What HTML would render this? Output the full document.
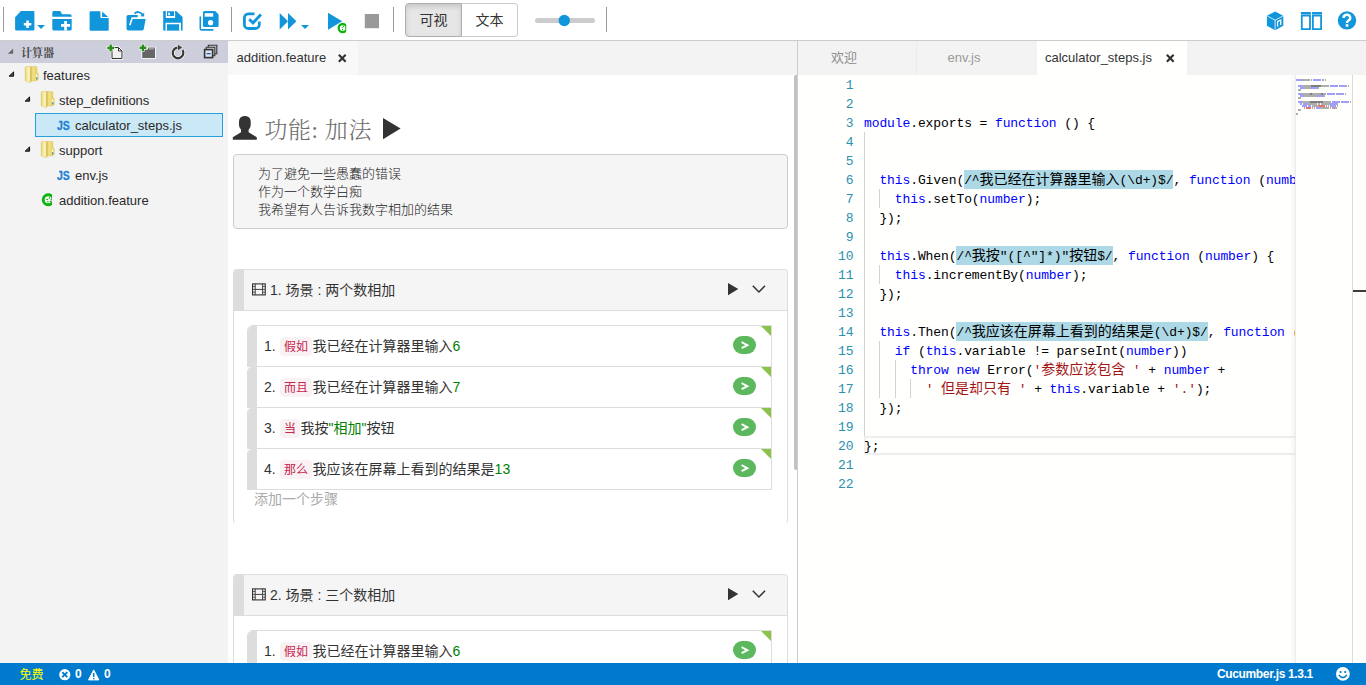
<!DOCTYPE html><html lang="zh-CN"><head><meta charset="utf-8"><title>Cucumber IDE</title><style>
*{box-sizing:border-box;margin:0;padding:0}
html,body{width:1366px;height:685px;overflow:hidden;background:#fff}
body{position:relative;font-family:"Liberation Sans","Noto Sans CJK SC",sans-serif;font-size:13px;color:#333}
.abs{position:absolute}
svg{position:absolute;overflow:visible}
#toolbar{position:absolute;left:0;top:0;width:1366px;height:41px;background:#fff;border-bottom:1px solid #ccc}
.sep{position:absolute;top:7px;width:1px;height:25px;background:#999}
#btngrp{position:absolute;left:405px;top:3px;width:113px;height:34px}
#btngrp div{position:absolute;top:0;height:34px;border:1px solid #ccc;font-size:14px;line-height:32px;text-align:center;color:#333}
#b1{left:0;width:57px;background:#e6e6e6;border-color:#adadad !important;border-radius:4px 0 0 4px;box-shadow:inset 0 3px 5px rgba(0,0,0,.125)}
#b2{left:56px;width:57px;background:#fff;border-radius:0 4px 4px 0;border-left-color:#adadad !important}
#sidebar{position:absolute;left:0;top:41px;width:228px;height:622px;background:#f3f3f3}
#sbhead{position:absolute;left:0;top:0;width:228px;height:22px;background:#cccedb}
#sbtitle{position:absolute;left:21px;top:1px;line-height:22px;font-size:11px;font-weight:bold;color:#444;font-family:"Liberation Serif","Noto Serif CJK SC",serif}
.row{position:absolute;left:0;width:228px;height:25px;line-height:26px;font-size:13px;color:#2a2a2a;white-space:nowrap}
.row span{position:absolute;top:0}
.js{font-weight:bold;font-size:12.5px;color:#1e7fd3;-webkit-text-stroke:.3px #1e7fd3;transform:scaleX(.84);transform-origin:0 50%}
#sel{position:absolute;left:35px;top:72px;width:188px;height:24px;background:#cbe8f6;border:1px solid #26a0da}
.tabbar{position:absolute;top:41px;height:34px;background:#f3f3f3}
.tab{position:absolute;top:0;height:34px;line-height:33px;font-size:13px;white-space:nowrap}
#mid{position:absolute;left:228px;top:75px;width:569px;height:588px;background:#fff;overflow:hidden}
#right{position:absolute;left:798px;top:75px;width:568px;height:588px;background:#fffffe;overflow:hidden}
#vline{position:absolute;left:797px;top:41px;width:1px;height:622px;background:#ccc}
#status{position:absolute;left:0;top:663px;width:1366px;height:22px;background:#007acc;color:#fff;font-size:12px;line-height:22px}
.cjk{font-family:"Liberation Sans","Noto Sans CJK SC",sans-serif}
.panel{position:absolute;left:5px;width:555px;border:1px solid #ddd;border-radius:4px;background:#fff}
.phead{position:absolute;left:0;top:0;width:553px;height:41px;background:#f5f5f5;border-bottom:1px solid #ddd;border-radius:3px 3px 0 0;overflow:hidden}
.phead .bar{position:absolute;left:0;top:0;width:10px;height:41px;background:#ddd}
.ptitle{position:absolute;left:36px;top:0;line-height:40px;font-size:14px;color:#333;white-space:nowrap}
.step{position:absolute;left:13px;width:525px;height:42px;border:1px solid #ddd;background:#fff;border-radius:6px 0 0 0;overflow:hidden}
.step .bar{position:absolute;left:-1px;top:-1px;width:10px;height:42px;background:#ddd}
.step .txt{position:absolute;left:16px;top:0;line-height:40px;font-size:14px;color:#333;white-space:nowrap}
.kw{background:#f9f2f4;color:#c7254e;font-size:12px;padding:3px 4px 2px 4.5px;border-radius:4px;margin-right:.5px}
.g{color:#008000}
.tri{position:absolute;right:0;top:0;width:0;height:0;border-top:10px solid #8bc34a;border-left:10px solid transparent}
.badge{position:absolute;left:485px;top:10px;width:23.3px;height:18px;border-radius:9px;background:#5cb85c}
.code{position:absolute;left:0;top:0;font-family:"Liberation Mono","Noto Sans CJK SC",monospace;font-size:13px;letter-spacing:-0.1px;line-height:19px;white-space:pre;color:#000}
.ln{position:absolute;left:0;width:55.5px;text-align:right;height:19px;line-height:21px;color:#2b91af}
.cl{position:absolute;left:66px;height:19px;line-height:21px}
.k{color:#0000ff}.s{color:#a31515}
.zh{font-size:14px;letter-spacing:0;line-height:0;font-family:"Liberation Mono","Noto Sans CJK SC",monospace}
.hl{background:#add8e6;display:inline-block;height:19px;vertical-align:top}
.guide{position:absolute;width:1px;background:#d3d3d3}
#mm i{position:absolute;height:1.3px;display:block}
</style></head><body><div id="toolbar"><div class="sep" style="left:3px"></div><div class="sep" style="left:231px"></div><div class="sep" style="left:393px"></div><div class="sep" style="left:606px"></div><svg width="1366" height="40" viewBox="0 0 1366 40" style="left:0;top:0"><path fill="#1296db" d="M15.1 17.2 L20.9 11 H33.4 a1 1 0 0 1 1 1 V29.6 a1 1 0 0 1 -1 1 H16.1 a1 1 0 0 1 -1 -1 Z"/><path fill="#fff" d="M26.3 20.5h2.5v2.5h2.5v2.5h-2.5v2.5h-2.5v-2.5h-2.5v-2.5h2.5z"/><path fill="#1296db" d="M37.2 24.9h7.8l-3.9 4.2z"/><path fill="#1296db" d="M52.3 16.7 V12.5 a1.5 1.5 0 0 1 1.5 -1.5 H59.6 a1.5 1.5 0 0 1 1.3 .8 L62 14.2 H70 a1.7 1.7 0 0 1 1.7 1.7 V16.7 Z"/><path fill="#1296db" d="M52.3 18.9 H71.7 V28.9 a1.7 1.7 0 0 1 -1.7 1.7 H54 a1.7 1.7 0 0 1 -1.7 -1.7 Z"/><path fill="#fff" d="M64.2 20.9h2.7v3.2h3.2v2.7h-3.2v3.8h-2.7v-3.8h-3.2v-2.7h3.2z"/><path fill="#1296db" d="M89.6 12.2 a1 1 0 0 1 1 -1 H100.4 V17 a1 1 0 0 0 1 1 H108.7 V29.7 a1 1 0 0 1 -1 1 H90.6 a1 1 0 0 1 -1 -1 Z"/><path fill="#1296db" d="M102.1 11.6 L108.2 16.9 H102.1 Z"/><path fill="#1296db" d="M126.5 16.8 a1.8 1.8 0 0 1 1.8 -1.8 H137.7 V17.3 H131.6 L129.1 24.9 L130.6 25.4 L132.7 19 H145.7 L143.7 29.2 a1.8 1.8 0 0 1 -1.7 1.4 H128.3 a1.8 1.8 0 0 1 -1.8 -1.8 Z"/><path fill="none" stroke="#1296db" stroke-width="1.8" d="M134.6 13.6 C136.5 11.4 140.5 11.2 142.6 14.8"/><path fill="#1296db" d="M144.2 12.4 V16.6 L140.3 16.2 Z"/><path fill="#1296db" d="M163.2 11 H176.2 L182.6 16.9 V30.6 H163.2 Z"/><path fill="#fff" d="M165.8 11 H175.1 V18 H165.8 Z M165.5 22.7 H181 V30.6 H165.5 Z"/><path fill="#1296db" d="M167 11.3 H174 V16.1 H167 Z M167 24.2 H179.1 V30.6 H167 Z"/><path fill="#fff" d="M168.2 12.7 H170 V15.2 H168.2 Z"/><path fill="#1296db" d="M203 12.5 a1.5 1.5 0 0 1 1.5 -1.5 H215.2 L218.6 14.4 V25.4 a1.5 1.5 0 0 1 -1.5 1.5 H204.5 a1.5 1.5 0 0 1 -1.5 -1.5 Z"/><path fill="#fff" d="M204.7 13.2 H213.2 V16.7 H204.7 Z"/><circle cx="210.6" cy="22.7" r="2.6" fill="#fff"/><path fill="none" stroke="#1296db" stroke-width="1.6" stroke-linecap="round" d="M200.3 17 V28.4 a1.5 1.5 0 0 0 1.5 1.5 H212.8"/><path fill="none" stroke="#1296db" stroke-width="2.8" d="M254.5 13.9 H248.4 a4 4 0 0 0 -4 4 V24.5 a4 4 0 0 0 4 4 H255.3 a4 4 0 0 0 4 -4 V21.5"/><path fill="none" stroke="#1296db" stroke-width="2.9" d="M249.2 19.2 L253 22.9 L260.9 14.4"/><path fill="#1296db" d="M279.7 13 L288 21.2 L279.7 29.4 Z M288 13 L296.4 21.2 L288 29.4 Z"/><path fill="#1296db" d="M301 24.9h8l-4 4.2z"/><path fill="#1296db" d="M328 12.7 L342.2 21.2 L328 29.7 Z"/><defs><clipPath id="cc"><rect x="330" y="20" width="16.2" height="16"/></clipPath></defs><g clip-path="url(#cc)"><circle cx="342.7" cy="28" r="5.6" fill="#fff"/><circle cx="342.7" cy="28" r="4" fill="none" stroke="#0db30d" stroke-width="2.3"/><circle cx="343.5" cy="26.4" r=".55" fill="#0db30d"/><circle cx="342.3" cy="27.5" r=".55" fill="#0db30d"/><circle cx="345.4" cy="27.5" r=".55" fill="#0db30d"/><circle cx="342.5" cy="29.4" r=".55" fill="#0db30d"/></g><rect x="364.8" y="14" width="14.2" height="14.2" fill="#999"/><rect x="535" y="18" width="60" height="5" rx="2.5" fill="#ccc"/><circle cx="564.3" cy="20.5" r="5.7" fill="#1296db"/><path fill="#1296db" d="M1275.1 11.4 L1283.3 15.8 V25.8 L1275.1 30.3 L1266.9 25.8 V15.8 Z"/><path fill="none" stroke="#fff" stroke-width=".8" d="M1267.3 16 L1275.1 20.2 L1282.9 16 M1275.1 20.2 V29.8"/><path fill="none" stroke="#fff" stroke-width="1.3" d="M1277.6 26.6 V21.6 L1280.7 20 V25"/><path fill="#1296db" d="M1300.9 12.1 H1310.9 V14.4 H1300.9 Z M1312 12.1 H1322 V14.4 H1312 Z"/><path fill="none" stroke="#1296db" stroke-width="1.8" d="M1301.8 15.6 H1310 V29.1 H1301.8 Z M1312.9 15.6 H1321.1 V29.1 H1312.9 Z"/><circle cx="1347" cy="20.4" r="9.2" fill="#1296db"/><path fill="none" stroke="#fff" stroke-width="2.4" d="M1343.6 18 a3.3 3.1 0 1 1 4.6 2.7 c-1 .5 -1.2 1 -1.2 2.2"/><rect x="1345.7" y="24.2" width="2.6" height="2.5" fill="#fff"/></svg><div id="btngrp"><div id="b1">可视</div><div id="b2">文本</div></div></div><div id="sidebar"><div id="sbhead"><div id="sbtitle">计算器</div><svg width="228" height="22" viewBox="0 41 228 22" style="left:0;top:0"><path fill="#666" d="M13.1 48.7 V53.8 H7.8 Z"/><path fill="#f0f0f0" stroke="#fff" stroke-width="2.4" d="M112 47.5 H118.5 L122 51 V58.5 H112 Z"/><path fill="#f0f0f0" stroke="#333" stroke-width="1" d="M112 47.5 H118.5 L122 51 V58.5 H112 Z M118.5 47.5 V51 H122"/><path fill="#fff" d="M106.6 46.3h2.3v-2.3h3.4v2.3h2.3v3.4h-2.3v2.3h-3.4v-2.3h-2.3z"/><path fill="#2a8c1f" d="M107.3 46.8h2.2v-2.2h2.4v2.2h2.2v2.4h-2.2v2.2h-2.4v-2.2h-2.2z"/><path fill="#666" stroke="#fff" stroke-width="1.6" d="M142.2 49.4 H147.6 L148.4 47.6 H155 V58 H142.2 Z"/><path fill="#666" d="M142.2 49.4 H147.6 L148.4 47.6 H155 V58 H142.2 Z"/><path fill="#d8d8d8" d="M149 48.5 H154 V49.3 H149 Z"/><path fill="#fff" d="M138.8 46.1h2.3v-2.3h3.4v2.3h2.3v3.4h-2.3v2.3h-3.4v-2.3h-2.3z"/><path fill="#2a8c1f" d="M139.5 46.6h2.2v-2.2h2.4v2.2h2.2v2.4h-2.2v2.2h-2.4v-2.2h-2.2z"/><path fill="none" stroke="#fff" stroke-width="3.6" d="M178 47.6 A5.3 5.3 0 1 0 182.6 50.2"/><path fill="none" stroke="#3a3a3a" stroke-width="2.3" d="M178 47.6 A5.3 5.3 0 1 0 182.6 50.2"/><path fill="#3a3a3a" stroke="#fff" stroke-width=".6" d="M177.6 44 L182.6 47.6 L177.6 51 Z"/><path fill="none" stroke="#333" stroke-width="1.1" d="M208.3 47.3 V45.3 H216.8 V53.8 H214.8 M206.3 49.3 V47.3 H214.8 V55.8 H212.8"/><rect x="204.6" y="49.6" width="8" height="8" fill="#dfe3ee" stroke="#333" stroke-width="1.6"/><rect x="206.6" y="53" width="4" height="1.3" fill="#1a5fb4"/></svg></div><div id="sel"></div><div class="row" style="top:22px"><svg width="7" height="7" viewBox="0 0 7 7" style="left:8.3px;top:8px"><path fill="#4a4a4a" stroke="#000" stroke-width=".9" stroke-linejoin="round" d="M5.6 .9 V5.2 H1.1 Z"/></svg><svg width="14" height="17" viewBox="0 0 14 17" style="left:24.9px;top:2.6px"><defs><linearGradient id="fa0" x1="0" x2="1"><stop offset="0" stop-color="#e3ca5f"/><stop offset=".2" stop-color="#f1e08a"/><stop offset=".5" stop-color="#f8eeb0"/><stop offset=".66" stop-color="#fffbe8"/><stop offset=".78" stop-color="#f0de84"/><stop offset="1" stop-color="#d0b146"/></linearGradient><linearGradient id="fb0" x1="0" x2="1"><stop offset="0" stop-color="#d6b94e"/><stop offset=".3" stop-color="#f3e288"/><stop offset="1" stop-color="#e5ca5a"/></linearGradient></defs><path stroke="#dcc566" stroke-width=".5" fill="url(#fb0)" d="M5.6 .5 H10.9 Q12 .5 12 1.6 V7.2 H12.7 Q13.2 7.2 13.2 7.7 V13.4 Q13.2 13.9 12.7 13.9 H12 V14 Q12 14.9 11 14.9 H5.6 Z"/><path stroke="#dcc566" stroke-width=".5" fill="url(#fa0)" d="M.2 1.7 Q.2 .5 1.4 .5 H5.2 Q6.1 .5 6.1 1.5 V15.6 Q6.1 16.4 5.3 16.4 H3.4 Q2.6 16.4 2.4 15.6 L.6 14.9 Q.2 14.7 .2 14.2 Z"/><rect x="11" y="8.4" width="1.3" height="3" fill="#fff" opacity=".92"/><rect x="11" y="11.3" width="1.3" height="2" fill="#2da1e0"/></svg><span style="left:43px">features</span></div><div class="row" style="top:47px"><svg width="7" height="7" viewBox="0 0 7 7" style="left:24.3px;top:8px"><path fill="#4a4a4a" stroke="#000" stroke-width=".9" stroke-linejoin="round" d="M5.6 .9 V5.2 H1.1 Z"/></svg><svg width="14" height="17" viewBox="0 0 14 17" style="left:40.9px;top:2.6px"><defs><linearGradient id="fa1" x1="0" x2="1"><stop offset="0" stop-color="#e3ca5f"/><stop offset=".2" stop-color="#f1e08a"/><stop offset=".5" stop-color="#f8eeb0"/><stop offset=".66" stop-color="#fffbe8"/><stop offset=".78" stop-color="#f0de84"/><stop offset="1" stop-color="#d0b146"/></linearGradient><linearGradient id="fb1" x1="0" x2="1"><stop offset="0" stop-color="#d6b94e"/><stop offset=".3" stop-color="#f3e288"/><stop offset="1" stop-color="#e5ca5a"/></linearGradient></defs><path stroke="#dcc566" stroke-width=".5" fill="url(#fb1)" d="M5.6 .5 H10.9 Q12 .5 12 1.6 V7.2 H12.7 Q13.2 7.2 13.2 7.7 V13.4 Q13.2 13.9 12.7 13.9 H12 V14 Q12 14.9 11 14.9 H5.6 Z"/><path stroke="#dcc566" stroke-width=".5" fill="url(#fa1)" d="M.2 1.7 Q.2 .5 1.4 .5 H5.2 Q6.1 .5 6.1 1.5 V15.6 Q6.1 16.4 5.3 16.4 H3.4 Q2.6 16.4 2.4 15.6 L.6 14.9 Q.2 14.7 .2 14.2 Z"/><rect x="11" y="8.4" width="1.3" height="3" fill="#fff" opacity=".92"/><rect x="11" y="11.3" width="1.3" height="2" fill="#2da1e0"/></svg><span style="left:59px">step_definitions</span></div><div class="row" style="top:72px"><span class="js" style="left:57px">JS</span><span style="left:75px">calculator_steps.js</span></div><div class="row" style="top:97px"><svg width="7" height="7" viewBox="0 0 7 7" style="left:24.3px;top:8px"><path fill="#4a4a4a" stroke="#000" stroke-width=".9" stroke-linejoin="round" d="M5.6 .9 V5.2 H1.1 Z"/></svg><svg width="14" height="17" viewBox="0 0 14 17" style="left:40.9px;top:2.6px"><defs><linearGradient id="fa3" x1="0" x2="1"><stop offset="0" stop-color="#e3ca5f"/><stop offset=".2" stop-color="#f1e08a"/><stop offset=".5" stop-color="#f8eeb0"/><stop offset=".66" stop-color="#fffbe8"/><stop offset=".78" stop-color="#f0de84"/><stop offset="1" stop-color="#d0b146"/></linearGradient><linearGradient id="fb3" x1="0" x2="1"><stop offset="0" stop-color="#d6b94e"/><stop offset=".3" stop-color="#f3e288"/><stop offset="1" stop-color="#e5ca5a"/></linearGradient></defs><path stroke="#dcc566" stroke-width=".5" fill="url(#fb3)" d="M5.6 .5 H10.9 Q12 .5 12 1.6 V7.2 H12.7 Q13.2 7.2 13.2 7.7 V13.4 Q13.2 13.9 12.7 13.9 H12 V14 Q12 14.9 11 14.9 H5.6 Z"/><path stroke="#dcc566" stroke-width=".5" fill="url(#fa3)" d="M.2 1.7 Q.2 .5 1.4 .5 H5.2 Q6.1 .5 6.1 1.5 V15.6 Q6.1 16.4 5.3 16.4 H3.4 Q2.6 16.4 2.4 15.6 L.6 14.9 Q.2 14.7 .2 14.2 Z"/><rect x="11" y="8.4" width="1.3" height="3" fill="#fff" opacity=".92"/><rect x="11" y="11.3" width="1.3" height="2" fill="#2da1e0"/></svg><span style="left:59px">support</span></div><div class="row" style="top:122px"><span class="js" style="left:57px">JS</span><span style="left:75px">env.js</span></div><div class="row" style="top:147px"><svg width="12" height="14" viewBox="0 0 12 14" style="left:41px;top:5px"><defs><clipPath id="ck"><rect x="0" y="0" width="11.1" height="14"/></clipPath></defs><g clip-path="url(#ck)"><circle cx="7.2" cy="6.8" r="5" fill="#f7f7f7" stroke="#0db30d" stroke-width="2.9"/><g fill="#0db30d"><ellipse cx="8.4" cy="4.9" rx=".6" ry=".9"/><ellipse cx="6.2" cy="6.4" rx=".9" ry=".6"/><ellipse cx="10.4" cy="6.3" rx=".9" ry=".6"/><ellipse cx="6.9" cy="8.7" rx=".75" ry=".75"/><ellipse cx="9.5" cy="8.5" rx=".75" ry=".7"/></g></g></svg><span style="left:59px">addition.feature</span></div></div><div class="tabbar" style="left:228px;width:569px"><div class="tab" style="left:0;width:130px;background:#f8f8f8;color:#333"><span class="abs" style="left:8.5px">addition.feature</span><svg width="8.5" height="8.5" viewBox="0 0 9 9" style="left:109.6px;top:13px"><path fill="none" stroke="#333" stroke-width="2.3" d="M.9 .9 L8.1 8.1 M8.1 .9 L.9 8.1"/></svg></div></div><div id="vline"></div><div class="tabbar" style="left:798px;width:568px"><div class="tab" style="left:0;width:119px;color:#8e8e8e;border-right:1px solid #ececec"><span class="abs" style="left:33px;font-size:13px">欢迎</span></div><div class="tab" style="left:119px;width:120px;color:#999"><span class="abs" style="left:30.5px">env.js</span></div><div class="tab" style="left:238.5px;width:150.5px;background:#fffffe;color:#333"><span class="abs" style="left:8.5px">calculator_steps.js</span><svg width="8.5" height="8.5" viewBox="0 0 9 9" style="left:129.5px;top:13px"><path fill="none" stroke="#333" stroke-width="2.3" d="M.9 .9 L8.1 8.1 M8.1 .9 L.9 8.1"/></svg></div></div><div id="mid"><svg width="30" height="30" viewBox="228 110 30 30" style="left:0;top:35px"><rect x="239" y="115.9" width="11.7" height="14.8" rx="5.2" ry="5.7" fill="#333"/><path fill="#333" d="M241 128.5 V132.2 L232.8 137.3 V139.8 H256.8 V137.3 L248.6 132.2 V128.5 Z"/></svg><div class="abs" style="left:36.5px;top:38px;font-size:23px;letter-spacing:.55px;line-height:36px;color:#6e6e6e;white-space:nowrap;font-family:'Liberation Serif','Noto Serif CJK SC',serif;font-weight:300">功能: 加法</div><svg width="18" height="22" viewBox="0 0 18 22" style="left:155.2px;top:43.3px"><path fill="#333" d="M0 0 L17.6 10.6 L0 21.2 Z"/></svg><div class="abs" style="left:5px;top:79px;width:555px;height:75px;background:#f5f5f5;border:1px solid #ccc;border-radius:4px"></div><div class="abs" style="left:30px;top:89.5px;font-size:13px;line-height:18px;color:#222;white-space:pre;font-weight:300">为了避免一些愚蠢的错误
作为一个数学白痴
我希望有人告诉我数字相加的结果</div><div class="panel" style="top:194px;height:255px;border-bottom-color:transparent"><div class="phead"><div class="bar"></div><svg width="14" height="12.8" viewBox="0 0 15 13" style="left:18px;top:13.2px"><rect x=".6" y=".6" width="13.6" height="11.8" fill="none" stroke="#333" stroke-width="1.2"/><path stroke="#333" stroke-width="1" fill="none" d="M3.4 .6 V12.4 M11.4 .6 V12.4 M3.4 6.5 H11.4"/><path stroke="#333" stroke-width=".8" fill="none" d="M.6 3.4 H3.4 M.6 6.5 H3.4 M.6 9.5 H3.4 M11.4 3.4 H14.2 M11.4 6.5 H14.2 M11.4 9.5 H14.2"/></svg><div class="ptitle">1. 场景 : 两个数相加</div><svg width="11" height="13" viewBox="0 0 11 13" style="left:493.8px;top:13px"><path fill="#333" d="M0 0 L10.3 6.1 L0 12.2 Z"/></svg><svg width="14" height="9" viewBox="0 0 14 9" style="left:517.6px;top:15.3px"><path fill="none" stroke="#333" stroke-width="1.5" d="M.8 .8 L6.9 7 L13 .8"/></svg></div><div class="step" style="top:55px"><div class="bar"></div><div class="txt">1. <span class="kw">假如</span>我已经在计算器里输入<span class="g">6</span></div><div class="badge"><svg width="24" height="18" viewBox="0 0 24 18" style="left:0;top:0"><path fill="none" stroke="#fff" stroke-width="1.9" d="M8.6 6.2 L14.4 9.2 L8.6 12.2"/></svg></div><div class="tri"></div></div><div class="step" style="top:96px"><div class="bar"></div><div class="txt">2. <span class="kw">而且</span>我已经在计算器里输入<span class="g">7</span></div><div class="badge"><svg width="24" height="18" viewBox="0 0 24 18" style="left:0;top:0"><path fill="none" stroke="#fff" stroke-width="1.9" d="M8.6 6.2 L14.4 9.2 L8.6 12.2"/></svg></div><div class="tri"></div></div><div class="step" style="top:137px"><div class="bar"></div><div class="txt">3. <span class="kw">当</span>我按<span class="g">"相加"</span>按钮</div><div class="badge"><svg width="24" height="18" viewBox="0 0 24 18" style="left:0;top:0"><path fill="none" stroke="#fff" stroke-width="1.9" d="M8.6 6.2 L14.4 9.2 L8.6 12.2"/></svg></div><div class="tri"></div></div><div class="step" style="top:178px"><div class="bar"></div><div class="txt">4. <span class="kw">那么</span>我应该在屏幕上看到的结果是<span class="g">13</span></div><div class="badge"><svg width="24" height="18" viewBox="0 0 24 18" style="left:0;top:0"><path fill="none" stroke="#fff" stroke-width="1.9" d="M8.6 6.2 L14.4 9.2 L8.6 12.2"/></svg></div><div class="tri"></div></div><div class="abs" style="left:20px;top:220px;height:15.5px;overflow:hidden;font-size:14px;line-height:20px;color:#aaa;white-space:nowrap"><span style="position:relative;top:-1px">添加一个步骤</span></div></div><div class="panel" style="top:499px;height:255px;border-bottom-color:transparent"><div class="phead"><div class="bar"></div><svg width="14" height="12.8" viewBox="0 0 15 13" style="left:18px;top:13.2px"><rect x=".6" y=".6" width="13.6" height="11.8" fill="none" stroke="#333" stroke-width="1.2"/><path stroke="#333" stroke-width="1" fill="none" d="M3.4 .6 V12.4 M11.4 .6 V12.4 M3.4 6.5 H11.4"/><path stroke="#333" stroke-width=".8" fill="none" d="M.6 3.4 H3.4 M.6 6.5 H3.4 M.6 9.5 H3.4 M11.4 3.4 H14.2 M11.4 6.5 H14.2 M11.4 9.5 H14.2"/></svg><div class="ptitle">2. 场景 : 三个数相加</div><svg width="11" height="13" viewBox="0 0 11 13" style="left:493.8px;top:13px"><path fill="#333" d="M0 0 L10.3 6.1 L0 12.2 Z"/></svg><svg width="14" height="9" viewBox="0 0 14 9" style="left:517.6px;top:15.3px"><path fill="none" stroke="#333" stroke-width="1.5" d="M.8 .8 L6.9 7 L13 .8"/></svg></div><div class="step" style="top:55px"><div class="bar"></div><div class="txt">1. <span class="kw">假如</span>我已经在计算器里输入<span class="g">6</span></div><div class="badge"><svg width="24" height="18" viewBox="0 0 24 18" style="left:0;top:0"><path fill="none" stroke="#fff" stroke-width="1.9" d="M8.6 6.2 L14.4 9.2 L8.6 12.2"/></svg></div><div class="tri"></div></div></div><div class="abs" style="left:565.5px;top:0;width:4.5px;height:394.5px;background:#c1c1c1;border-radius:2px 0 2px 2px"></div></div><div id="right"><div class="abs" style="left:0;top:0;width:497px;height:588px;overflow:hidden"><div class="code"><div class="abs" style="left:66px;top:361px;width:440px;height:19px;border:2px solid #eee;border-right:0"></div><div class="guide" style="left:66px;top:57px;height:304px"></div><div class="guide" style="left:81.4px;top:114px;height:19px"></div><div class="guide" style="left:81.4px;top:190px;height:19px"></div><div class="guide" style="left:81.4px;top:266px;height:57px"></div><div class="guide" style="left:96.8px;top:285px;height:38px"></div><div class="guide" style="left:112.2px;top:304px;height:19px"></div><div class="ln" style="top:0px">1</div><div class="ln" style="top:19px">2</div><div class="ln" style="top:38px">3</div><div class="cl" style="top:38px"><span class="k">module</span>.exports = <span class="k">function</span> () {</div><div class="ln" style="top:57px">4</div><div class="ln" style="top:76px">5</div><div class="ln" style="top:95px">6</div><div class="cl" style="top:95px">  <span class="k">this</span>.Given(<span class="hl">/^<span class="zh">我已经在计算器里输入</span>(\d+)$/</span>, <span class="k">function</span> (<span class="k">number</span>) {</div><div class="ln" style="top:114px">7</div><div class="cl" style="top:114px">    <span class="k">this</span>.setTo(<span class="k">number</span>);</div><div class="ln" style="top:133px">8</div><div class="cl" style="top:133px">  });</div><div class="ln" style="top:152px">9</div><div class="ln" style="top:171px">10</div><div class="cl" style="top:171px">  <span class="k">this</span>.When(<span class="hl">/^<span class="zh">我按</span>&quot;([^&quot;]*)&quot;<span class="zh">按钮</span>$/</span>, <span class="k">function</span> (<span class="k">number</span>) {</div><div class="ln" style="top:190px">11</div><div class="cl" style="top:190px">    <span class="k">this</span>.incrementBy(<span class="k">number</span>);</div><div class="ln" style="top:209px">12</div><div class="cl" style="top:209px">  });</div><div class="ln" style="top:228px">13</div><div class="ln" style="top:247px">14</div><div class="cl" style="top:247px">  <span class="k">this</span>.Then(<span class="hl">/^<span class="zh">我应该在屏幕上看到的结果是</span>(\d+)$/</span>, <span class="k">function</span> (<span class="k">number</span>) {</div><div class="ln" style="top:266px">15</div><div class="cl" style="top:266px">    <span class="k">if</span> (<span class="k">this</span>.variable != parseInt(<span class="k">number</span>))</div><div class="ln" style="top:285px">16</div><div class="cl" style="top:285px">      <span class="k">throw</span> <span class="k">new</span> Error(<span class="s">'<span class="zh">参数应该包含</span> '</span> + <span class="k">number</span> +</div><div class="ln" style="top:304px">17</div><div class="cl" style="top:304px">        <span class="s">' <span class="zh">但是却只有</span> '</span> + <span class="k">this</span>.variable + <span class="s">'.'</span>);</div><div class="ln" style="top:323px">18</div><div class="cl" style="top:323px">  });</div><div class="ln" style="top:342px">19</div><div class="ln" style="top:361px">20</div><div class="cl" style="top:361px">};</div><div class="ln" style="top:380px">21</div><div class="ln" style="top:399px">22</div></div></div><div class="abs" style="left:491px;top:0;width:7px;height:588px;background:linear-gradient(to right,rgba(0,0,0,0),rgba(0,0,0,.045))"></div><div class="abs" style="left:497px;top:0;width:57px;height:588px;background:#fffffe;border-left:1px solid #ebebeb"></div><div class="abs" id="mm" style="left:498px;top:0;width:56px;height:60px;overflow:hidden"><i style="left:0.0px;top:4.4px;width:6.0px;background:rgba(0,0,255,.38)"></i><i style="left:6.0px;top:4.4px;width:8.0px;background:rgba(0,0,0,.32)"></i><i style="left:15.0px;top:4.4px;width:1.0px;background:rgba(0,0,0,.32)"></i><i style="left:17.0px;top:4.4px;width:8.0px;background:rgba(0,0,255,.38)"></i><i style="left:26.0px;top:4.4px;width:2.0px;background:rgba(0,0,0,.32)"></i><i style="left:29.0px;top:4.4px;width:1.0px;background:rgba(0,0,0,.32)"></i><i style="left:2.0px;top:10.4px;width:4.0px;background:rgba(0,0,255,.38)"></i><i style="left:6.0px;top:10.4px;width:9.0px;background:rgba(0,0,0,.32)"></i><i style="left:15.0px;top:10.4px;width:10.0px;background:rgba(0,0,0,.5)"></i><i style="left:25.0px;top:10.4px;width:8.0px;background:rgba(0,0,0,.32)"></i><i style="left:34.0px;top:10.4px;width:8.0px;background:rgba(0,0,255,.38)"></i><i style="left:43.0px;top:10.4px;width:1.0px;background:rgba(0,0,0,.32)"></i><i style="left:44.0px;top:10.4px;width:6.0px;background:rgba(0,0,255,.38)"></i><i style="left:50.0px;top:10.4px;width:1.0px;background:rgba(0,0,0,.32)"></i><i style="left:52.0px;top:10.4px;width:1.0px;background:rgba(0,0,0,.32)"></i><i style="left:4.0px;top:12.4px;width:4.0px;background:rgba(0,0,255,.38)"></i><i style="left:8.0px;top:12.4px;width:7.0px;background:rgba(0,0,0,.32)"></i><i style="left:15.0px;top:12.4px;width:6.0px;background:rgba(0,0,255,.38)"></i><i style="left:21.0px;top:12.4px;width:2.0px;background:rgba(0,0,0,.32)"></i><i style="left:2.0px;top:14.4px;width:3.0px;background:rgba(0,0,0,.32)"></i><i style="left:2.0px;top:18.4px;width:4.0px;background:rgba(0,0,255,.38)"></i><i style="left:6.0px;top:18.4px;width:8.0px;background:rgba(0,0,0,.32)"></i><i style="left:14.0px;top:18.4px;width:2.0px;background:rgba(0,0,0,.5)"></i><i style="left:16.0px;top:18.4px;width:9.0px;background:rgba(0,0,0,.32)"></i><i style="left:25.0px;top:18.4px;width:2.0px;background:rgba(0,0,0,.5)"></i><i style="left:27.0px;top:18.4px;width:3.0px;background:rgba(0,0,0,.32)"></i><i style="left:31.0px;top:18.4px;width:8.0px;background:rgba(0,0,255,.38)"></i><i style="left:40.0px;top:18.4px;width:1.0px;background:rgba(0,0,0,.32)"></i><i style="left:41.0px;top:18.4px;width:6.0px;background:rgba(0,0,255,.38)"></i><i style="left:47.0px;top:18.4px;width:1.0px;background:rgba(0,0,0,.32)"></i><i style="left:49.0px;top:18.4px;width:1.0px;background:rgba(0,0,0,.32)"></i><i style="left:4.0px;top:20.4px;width:4.0px;background:rgba(0,0,255,.38)"></i><i style="left:8.0px;top:20.4px;width:13.0px;background:rgba(0,0,0,.32)"></i><i style="left:21.0px;top:20.4px;width:6.0px;background:rgba(0,0,255,.38)"></i><i style="left:27.0px;top:20.4px;width:2.0px;background:rgba(0,0,0,.32)"></i><i style="left:2.0px;top:22.4px;width:3.0px;background:rgba(0,0,0,.32)"></i><i style="left:2.0px;top:26.4px;width:4.0px;background:rgba(0,0,255,.38)"></i><i style="left:6.0px;top:26.4px;width:8.0px;background:rgba(0,0,0,.32)"></i><i style="left:14.0px;top:26.4px;width:13.0px;background:rgba(0,0,0,.5)"></i><i style="left:27.0px;top:26.4px;width:8.0px;background:rgba(0,0,0,.32)"></i><i style="left:36.0px;top:26.4px;width:8.0px;background:rgba(0,0,255,.38)"></i><i style="left:45.0px;top:26.4px;width:1.0px;background:rgba(0,0,0,.32)"></i><i style="left:46.0px;top:26.4px;width:6.0px;background:rgba(0,0,255,.38)"></i><i style="left:52.0px;top:26.4px;width:1.0px;background:rgba(0,0,0,.32)"></i><i style="left:54.0px;top:26.4px;width:1.0px;background:rgba(0,0,0,.32)"></i><i style="left:4.0px;top:28.4px;width:2.0px;background:rgba(0,0,255,.38)"></i><i style="left:7.0px;top:28.4px;width:1.0px;background:rgba(0,0,0,.32)"></i><i style="left:8.0px;top:28.4px;width:4.0px;background:rgba(0,0,255,.38)"></i><i style="left:12.0px;top:28.4px;width:9.0px;background:rgba(0,0,0,.32)"></i><i style="left:22.0px;top:28.4px;width:2.0px;background:rgba(0,0,0,.32)"></i><i style="left:25.0px;top:28.4px;width:9.0px;background:rgba(0,0,0,.32)"></i><i style="left:34.0px;top:28.4px;width:6.0px;background:rgba(0,0,255,.38)"></i><i style="left:40.0px;top:28.4px;width:2.0px;background:rgba(0,0,0,.32)"></i><i style="left:6.0px;top:30.4px;width:5.0px;background:rgba(0,0,255,.38)"></i><i style="left:12.0px;top:30.4px;width:3.0px;background:rgba(0,0,255,.38)"></i><i style="left:16.0px;top:30.4px;width:6.0px;background:rgba(0,0,0,.32)"></i><i style="left:22.0px;top:30.4px;width:1.0px;background:rgba(163,21,21,.45)"></i><i style="left:23.0px;top:30.4px;width:6.0px;background:rgba(200,21,21,.6)"></i><i style="left:30.0px;top:30.4px;width:1.0px;background:rgba(163,21,21,.45)"></i><i style="left:32.0px;top:30.4px;width:1.0px;background:rgba(0,0,0,.32)"></i><i style="left:34.0px;top:30.4px;width:6.0px;background:rgba(0,0,255,.38)"></i><i style="left:41.0px;top:30.4px;width:1.0px;background:rgba(0,0,0,.32)"></i><i style="left:8.0px;top:32.4px;width:1.0px;background:rgba(163,21,21,.45)"></i><i style="left:10.0px;top:32.4px;width:5.0px;background:rgba(200,21,21,.6)"></i><i style="left:16.0px;top:32.4px;width:1.0px;background:rgba(163,21,21,.45)"></i><i style="left:18.0px;top:32.4px;width:1.0px;background:rgba(0,0,0,.32)"></i><i style="left:20.0px;top:32.4px;width:4.0px;background:rgba(0,0,255,.38)"></i><i style="left:24.0px;top:32.4px;width:9.0px;background:rgba(0,0,0,.32)"></i><i style="left:34.0px;top:32.4px;width:1.0px;background:rgba(0,0,0,.32)"></i><i style="left:36.0px;top:32.4px;width:3.0px;background:rgba(163,21,21,.45)"></i><i style="left:39.0px;top:32.4px;width:2.0px;background:rgba(0,0,0,.32)"></i><i style="left:2.0px;top:34.4px;width:3.0px;background:rgba(0,0,0,.32)"></i><i style="left:0.0px;top:38.4px;width:2.0px;background:rgba(0,0,0,.32)"></i></div><div class="abs" style="left:554px;top:0;width:14px;height:588px;border-left:1px solid #dcdcdc;background:#fffffe"></div><div class="abs" style="left:555px;top:215px;width:13px;height:2px;background:#3c3c3c"></div></div><div id="status"><span class="abs" style="left:19.6px;top:1px;color:#ffff00;font-size:12px">免费</span><svg width="12" height="12" viewBox="0 0 12 12" style="left:58.6px;top:6px"><circle cx="5.8" cy="5.7" r="5.6" fill="#fff"/><path stroke="#007acc" stroke-width="1.9" d="M3.3 3.2 L8.3 8.2 M8.3 3.2 L3.3 8.2"/></svg><span class="abs" style="left:75px;top:0;font-weight:bold">0</span><svg width="12" height="12" viewBox="0 0 12 12" style="left:87.8px;top:6px"><path fill="#fff" stroke="#fff" stroke-width="1" stroke-linejoin="round" d="M5.7 .9 L10.9 10.9 H.5 Z"/><path stroke="#007acc" stroke-width="1.5" d="M5.7 4 V8 M5.7 9 V10.3"/></svg><span class="abs" style="left:104px;top:0;font-weight:bold">0</span><span class="abs" style="left:1217px;top:0;font-weight:bold;letter-spacing:-0.36px;white-space:nowrap">Cucumber.js 1.3.1</span><svg width="14" height="14" viewBox="0 0 14 14" style="left:1336px;top:4px"><circle cx="6.9" cy="6.9" r="6.9" fill="#fff"/><circle cx="4.6" cy="5" r="1.1" fill="#007acc"/><circle cx="9.2" cy="5" r="1.1" fill="#007acc"/><path fill="none" stroke="#007acc" stroke-width="1.4" d="M2.9 8 Q6.9 13 10.9 8"/></svg></div></body></html>
